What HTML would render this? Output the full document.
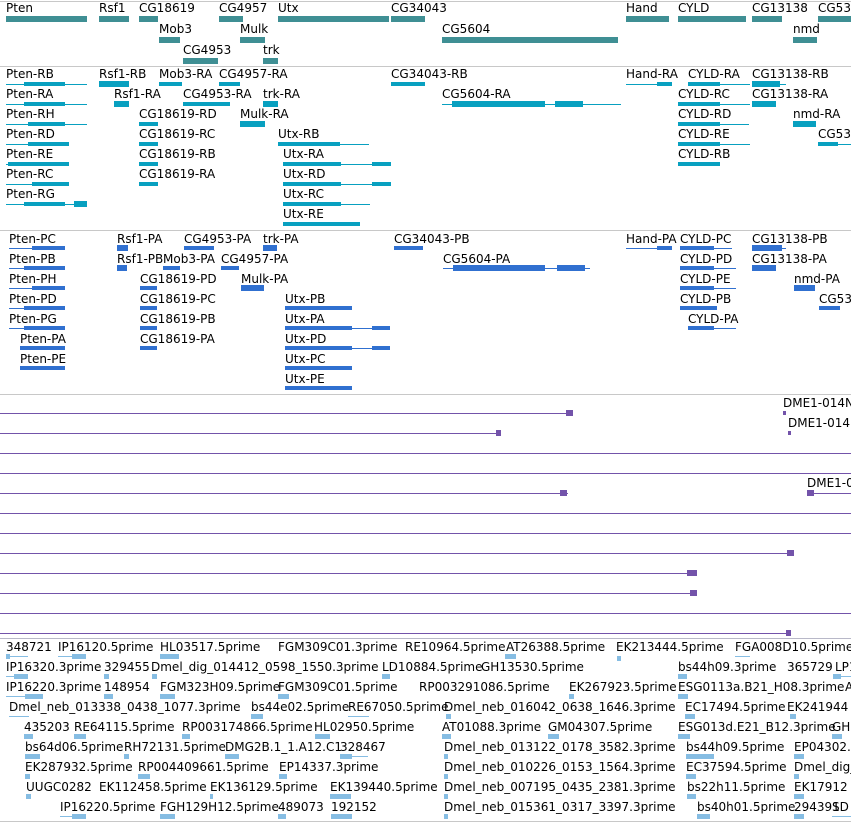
<!DOCTYPE html>
<html><head><meta charset="utf-8"><style>
body{margin:0;width:851px;height:822px;overflow:hidden;background:#fff;position:relative;font-family:"DejaVu Sans","Liberation Sans",sans-serif;font-size:12px;color:#000}
.t{position:absolute;white-space:nowrap;line-height:13px}
.s{position:absolute;left:0;width:851px;height:1px;background:#c8c8c8}
.g{position:absolute;height:6px;background:#3f8f94}
.c{position:absolute;height:1px;background:#08a0c0}
.cb{position:absolute;height:6px;background:#08a0c0}
.bl{position:absolute;height:1px;background:#3070d0}
.bb{position:absolute;height:6px;background:#3070d0}
.p{position:absolute;height:1px;background:#7353aa}
.pa{position:absolute;height:6px;width:7px;background:#7353aa}
.lb{position:absolute;height:5px;background:#86bde3}
.ll{position:absolute;height:1px;background:#86bde3}
</style></head><body>
<div class="s" style="top:1px"></div>
<div class="s" style="top:66px"></div>
<div class="s" style="top:230px"></div>
<div class="s" style="top:394px"></div>
<div class="s" style="top:638px;background:#b8b8c8"></div>
<div class="s" style="top:821px"></div>

<!-- track 1 -->
<div class="t" style="left:6px;top:2px">Pten</div><div class="g" style="left:6px;top:16px;width:81px"></div>
<div class="t" style="left:99px;top:2px">Rsf1</div><div class="g" style="left:99px;top:16px;width:30px"></div>
<div class="t" style="left:139px;top:2px">CG18619</div><div class="g" style="left:139px;top:16px;width:19px"></div>
<div class="t" style="left:219px;top:2px">CG4957</div><div class="g" style="left:219px;top:16px;width:24px"></div>
<div class="t" style="left:278px;top:2px">Utx</div><div class="g" style="left:278px;top:16px;width:111px"></div>
<div class="t" style="left:391px;top:2px">CG34043</div><div class="g" style="left:391px;top:16px;width:34px"></div>
<div class="t" style="left:626px;top:2px">Hand</div><div class="g" style="left:626px;top:16px;width:43px"></div>
<div class="t" style="left:678px;top:2px">CYLD</div><div class="g" style="left:678px;top:16px;width:68px"></div>
<div class="t" style="left:752px;top:2px">CG13138</div><div class="g" style="left:752px;top:16px;width:30px"></div>
<div class="t" style="left:818px;top:2px">CG5340</div><div class="g" style="left:818px;top:16px;width:33px"></div>
<div class="t" style="left:159px;top:23px">Mob3</div><div class="g" style="left:159px;top:37px;width:21px"></div>
<div class="t" style="left:240px;top:23px">Mulk</div><div class="g" style="left:240px;top:37px;width:25px"></div>
<div class="t" style="left:442px;top:23px">CG5604</div><div class="g" style="left:442px;top:37px;width:176px"></div>
<div class="t" style="left:793px;top:23px">nmd</div><div class="g" style="left:793px;top:37px;width:24px"></div>
<div class="t" style="left:183px;top:44px">CG4953</div><div class="g" style="left:183px;top:58px;width:35px"></div>
<div class="t" style="left:263px;top:44px">trk</div><div class="g" style="left:263px;top:58px;width:15px"></div>

<!-- track 2 -->
<div class="t" style="left:6px;top:68px">Pten-RB</div><div class="c" style="left:6px;top:84px;width:81px"></div><div class="cb" style="left:24px;top:82px;width:41px;height:4px"></div>
<div class="t" style="left:99px;top:68px">Rsf1-RB</div><div class="cb" style="left:99px;top:81px;width:30px"></div>
<div class="t" style="left:159px;top:68px">Mob3-RA</div><div class="cb" style="left:159px;top:82px;width:23px;height:4px"></div>
<div class="t" style="left:219px;top:68px">CG4957-RA</div><div class="cb" style="left:219px;top:82px;width:21px;height:4px"></div>
<div class="t" style="left:391px;top:68px">CG34043-RB</div><div class="cb" style="left:391px;top:82px;width:34px;height:4px"></div>
<div class="t" style="left:626px;top:68px">Hand-RA</div><div class="c" style="left:626px;top:84px;width:46px"></div><div class="cb" style="left:657px;top:82px;width:15px;height:4px"></div>
<div class="t" style="left:688px;top:68px">CYLD-RA</div><div class="c" style="left:688px;top:84px;width:62px"></div><div class="cb" style="left:688px;top:82px;width:32px;height:4px"></div>
<div class="t" style="left:752px;top:68px">CG13138-RB</div><div class="cb" style="left:752px;top:81px;width:28px"></div><div class="c" style="left:752px;top:84px;width:34px"></div>

<div class="t" style="left:6px;top:88px">Pten-RA</div><div class="c" style="left:6px;top:104px;width:81px"></div><div class="cb" style="left:24px;top:102px;width:41px;height:4px"></div>
<div class="t" style="left:114px;top:88px">Rsf1-RA</div><div class="cb" style="left:114px;top:101px;width:15px"></div>
<div class="t" style="left:183px;top:88px">CG4953-RA</div><div class="cb" style="left:183px;top:102px;width:47px;height:4px"></div>
<div class="t" style="left:263px;top:88px">trk-RA</div><div class="cb" style="left:263px;top:101px;width:15px"></div>
<div class="t" style="left:442px;top:88px">CG5604-RA</div><div class="c" style="left:442px;top:104px;width:179px"></div><div class="cb" style="left:452px;top:101px;width:93px"></div><div class="cb" style="left:555px;top:101px;width:28px"></div>
<div class="t" style="left:678px;top:88px">CYLD-RC</div><div class="c" style="left:678px;top:104px;width:72px"></div><div class="cb" style="left:678px;top:102px;width:42px;height:4px"></div>
<div class="t" style="left:752px;top:88px">CG13138-RA</div><div class="cb" style="left:752px;top:101px;width:24px"></div>

<div class="t" style="left:6px;top:108px">Pten-RH</div><div class="c" style="left:6px;top:124px;width:81px"></div><div class="cb" style="left:28px;top:122px;width:37px;height:4px"></div>
<div class="t" style="left:139px;top:108px">CG18619-RD</div><div class="cb" style="left:139px;top:122px;width:19px;height:4px"></div>
<div class="t" style="left:240px;top:108px">Mulk-RA</div><div class="cb" style="left:240px;top:121px;width:25px"></div>
<div class="t" style="left:678px;top:108px">CYLD-RD</div><div class="c" style="left:678px;top:124px;width:71px"></div><div class="cb" style="left:678px;top:122px;width:42px;height:4px"></div>
<div class="t" style="left:793px;top:108px">nmd-RA</div><div class="cb" style="left:793px;top:121px;width:23px"></div>

<div class="t" style="left:6px;top:128px">Pten-RD</div><div class="c" style="left:6px;top:144px;width:63px"></div><div class="cb" style="left:28px;top:142px;width:41px;height:4px"></div>
<div class="t" style="left:139px;top:128px">CG18619-RC</div><div class="cb" style="left:139px;top:142px;width:19px;height:4px"></div>
<div class="t" style="left:278px;top:128px">Utx-RB</div><div class="c" style="left:278px;top:144px;width:91px"></div><div class="cb" style="left:278px;top:142px;width:62px;height:4px"></div>
<div class="t" style="left:678px;top:128px">CYLD-RE</div><div class="c" style="left:678px;top:144px;width:72px"></div><div class="cb" style="left:678px;top:142px;width:42px;height:4px"></div>
<div class="t" style="left:818px;top:128px">CG5340</div><div class="c" style="left:818px;top:144px;width:33px"></div><div class="cb" style="left:818px;top:142px;width:20px;height:4px"></div>

<div class="t" style="left:6px;top:148px">Pten-RE</div><div class="c" style="left:6px;top:164px;width:63px"></div><div class="cb" style="left:8px;top:162px;width:61px;height:4px"></div>
<div class="t" style="left:139px;top:148px">CG18619-RB</div><div class="cb" style="left:139px;top:162px;width:19px;height:4px"></div>
<div class="t" style="left:283px;top:148px">Utx-RA</div><div class="c" style="left:283px;top:164px;width:108px"></div><div class="cb" style="left:283px;top:162px;width:58px;height:4px"></div><div class="cb" style="left:372px;top:162px;width:19px;height:4px"></div>
<div class="t" style="left:678px;top:148px">CYLD-RB</div><div class="cb" style="left:678px;top:162px;width:42px;height:4px"></div>

<div class="t" style="left:6px;top:168px">Pten-RC</div><div class="c" style="left:6px;top:184px;width:63px"></div><div class="cb" style="left:32px;top:182px;width:37px;height:4px"></div>
<div class="t" style="left:139px;top:168px">CG18619-RA</div><div class="cb" style="left:139px;top:182px;width:19px;height:4px"></div>
<div class="t" style="left:283px;top:168px">Utx-RD</div><div class="c" style="left:283px;top:184px;width:108px"></div><div class="cb" style="left:283px;top:182px;width:58px;height:4px"></div><div class="cb" style="left:372px;top:182px;width:19px;height:4px"></div>

<div class="t" style="left:6px;top:188px">Pten-RG</div><div class="c" style="left:6px;top:204px;width:81px"></div><div class="cb" style="left:24px;top:202px;width:41px;height:4px"></div><div class="cb" style="left:74px;top:201px;width:13px"></div>
<div class="t" style="left:283px;top:188px">Utx-RC</div><div class="c" style="left:283px;top:204px;width:87px"></div><div class="cb" style="left:283px;top:202px;width:58px;height:4px"></div>
<div class="t" style="left:283px;top:208px">Utx-RE</div><div class="cb" style="left:283px;top:222px;width:77px;height:4px"></div>

<!-- track 3 -->
<div class="t" style="left:9px;top:233px">Pten-PC</div><div class="bl" style="left:9px;top:248px;width:56px"></div><div class="bb" style="left:32px;top:246px;width:33px;height:4px"></div>
<div class="t" style="left:117px;top:233px">Rsf1-PA</div><div class="bb" style="left:117px;top:245px;width:11px"></div>
<div class="t" style="left:184px;top:233px">CG4953-PA</div><div class="bb" style="left:184px;top:246px;width:30px;height:4px"></div>
<div class="t" style="left:263px;top:233px">trk-PA</div><div class="bb" style="left:263px;top:245px;width:14px"></div>
<div class="t" style="left:394px;top:233px">CG34043-PB</div><div class="bb" style="left:394px;top:246px;width:29px;height:4px"></div>
<div class="t" style="left:626px;top:233px">Hand-PA</div><div class="bl" style="left:626px;top:248px;width:46px"></div><div class="bb" style="left:657px;top:246px;width:15px;height:4px"></div>
<div class="t" style="left:680px;top:233px">CYLD-PC</div><div class="bl" style="left:680px;top:248px;width:52px"></div><div class="bb" style="left:680px;top:246px;width:34px;height:4px"></div>
<div class="t" style="left:752px;top:233px">CG13138-PB</div><div class="bb" style="left:752px;top:245px;width:30px"></div><div class="bl" style="left:752px;top:248px;width:34px"></div>

<div class="t" style="left:9px;top:253px">Pten-PB</div><div class="bl" style="left:9px;top:268px;width:56px"></div><div class="bb" style="left:24px;top:266px;width:41px;height:4px"></div>
<div class="t" style="left:117px;top:253px">Rsf1-PB</div><div class="bb" style="left:117px;top:265px;width:10px"></div>
<div class="t" style="left:163px;top:253px">Mob3-PA</div><div class="bb" style="left:163px;top:266px;width:17px;height:4px"></div>
<div class="t" style="left:221px;top:253px">CG4957-PA</div><div class="bb" style="left:221px;top:266px;width:18px;height:4px"></div>
<div class="t" style="left:443px;top:253px">CG5604-PA</div><div class="bl" style="left:443px;top:268px;width:147px"></div><div class="bb" style="left:453px;top:265px;width:92px"></div><div class="bb" style="left:557px;top:265px;width:28px"></div>
<div class="t" style="left:680px;top:253px">CYLD-PD</div><div class="bl" style="left:680px;top:268px;width:56px"></div><div class="bb" style="left:680px;top:266px;width:34px;height:4px"></div>
<div class="t" style="left:752px;top:253px">CG13138-PA</div><div class="bb" style="left:752px;top:265px;width:24px"></div>

<div class="t" style="left:9px;top:273px">Pten-PH</div><div class="bl" style="left:9px;top:288px;width:56px"></div><div class="bb" style="left:32px;top:286px;width:33px;height:4px"></div>
<div class="t" style="left:140px;top:273px">CG18619-PD</div><div class="bb" style="left:140px;top:286px;width:17px;height:4px"></div>
<div class="t" style="left:241px;top:273px">Mulk-PA</div><div class="bb" style="left:241px;top:285px;width:23px"></div>
<div class="t" style="left:680px;top:273px">CYLD-PE</div><div class="bl" style="left:680px;top:288px;width:56px"></div><div class="bb" style="left:680px;top:286px;width:34px;height:4px"></div>
<div class="t" style="left:794px;top:273px">nmd-PA</div><div class="bb" style="left:794px;top:285px;width:21px"></div>

<div class="t" style="left:9px;top:293px">Pten-PD</div><div class="bl" style="left:9px;top:308px;width:56px"></div><div class="bb" style="left:24px;top:306px;width:41px;height:4px"></div>
<div class="t" style="left:140px;top:293px">CG18619-PC</div><div class="bb" style="left:140px;top:306px;width:17px;height:4px"></div>
<div class="t" style="left:285px;top:293px">Utx-PB</div><div class="bb" style="left:285px;top:306px;width:67px;height:4px"></div>
<div class="t" style="left:680px;top:293px">CYLD-PB</div><div class="bb" style="left:680px;top:306px;width:37px;height:4px"></div>
<div class="t" style="left:819px;top:293px">CG5340</div><div class="bb" style="left:819px;top:306px;width:21px;height:4px"></div>

<div class="t" style="left:9px;top:313px">Pten-PG</div><div class="bl" style="left:9px;top:328px;width:56px"></div><div class="bb" style="left:24px;top:326px;width:41px;height:4px"></div>
<div class="t" style="left:140px;top:313px">CG18619-PB</div><div class="bb" style="left:140px;top:326px;width:17px;height:4px"></div>
<div class="t" style="left:285px;top:313px">Utx-PA</div><div class="bl" style="left:285px;top:328px;width:105px"></div><div class="bb" style="left:285px;top:326px;width:67px;height:4px"></div><div class="bb" style="left:372px;top:326px;width:18px;height:4px"></div>
<div class="t" style="left:688px;top:313px">CYLD-PA</div><div class="bl" style="left:688px;top:328px;width:48px"></div><div class="bb" style="left:688px;top:326px;width:26px;height:4px"></div>

<div class="t" style="left:20px;top:333px">Pten-PA</div><div class="bb" style="left:20px;top:346px;width:45px;height:4px"></div>
<div class="t" style="left:140px;top:333px">CG18619-PA</div><div class="bb" style="left:140px;top:346px;width:17px;height:4px"></div>
<div class="t" style="left:285px;top:333px">Utx-PD</div><div class="bl" style="left:285px;top:348px;width:105px"></div><div class="bb" style="left:285px;top:346px;width:67px;height:4px"></div><div class="bb" style="left:372px;top:346px;width:18px;height:4px"></div>
<div class="t" style="left:20px;top:353px">Pten-PE</div><div class="bb" style="left:20px;top:366px;width:45px;height:4px"></div>
<div class="t" style="left:285px;top:353px">Utx-PC</div><div class="bb" style="left:285px;top:366px;width:67px;height:4px"></div>
<div class="t" style="left:285px;top:373px">Utx-PE</div><div class="bb" style="left:285px;top:386px;width:67px;height:4px"></div>

<!-- track 4 -->
<div class="p" style="left:0;top:413px;width:568px"></div><div class="pa" style="left:566px;top:410px"></div>
<div class="p" style="left:0;top:433px;width:498px"></div><div class="pa" style="left:496px;top:430px;width:5px"></div>
<div class="p" style="left:0;top:453px;width:851px"></div>
<div class="p" style="left:0;top:473px;width:851px"></div>
<div class="p" style="left:0;top:493px;width:568px"></div><div class="pa" style="left:560px;top:490px"></div>
<div class="p" style="left:0;top:513px;width:851px"></div>
<div class="p" style="left:0;top:533px;width:851px"></div>
<div class="p" style="left:0;top:553px;width:793px"></div><div class="pa" style="left:787px;top:550px"></div>
<div class="p" style="left:0;top:573px;width:692px"></div><div class="pa" style="left:687px;top:570px;width:10px"></div>
<div class="p" style="left:0;top:593px;width:692px"></div><div class="pa" style="left:690px;top:590px"></div>
<div class="p" style="left:0;top:613px;width:851px"></div>
<div class="p" style="left:0;top:633px;width:790px"></div><div class="pa" style="left:786px;top:630px;width:5px"></div>
<div class="t" style="left:783px;top:397px">DME1-014N</div><div class="pa" style="left:783px;top:411px;width:3px;height:4px"></div>
<div class="t" style="left:788px;top:417px">DME1-014</div><div class="pa" style="left:788px;top:431px;width:3px;height:4px"></div>
<div class="t" style="left:807px;top:477px">DME1-0</div><div class="pa" style="left:807px;top:490px"></div><div class="p" style="left:807px;top:493px;width:44px"></div>

<!-- track 5 -->
<div class="t" style="left:6px;top:641px">348721</div><div class="ll" style="left:6px;top:656px;width:22px"></div><div class="lb" style="left:6px;top:654px;width:4px"></div>
<div class="t" style="left:58px;top:641px">IP16120.5prime</div><div class="ll" style="left:58px;top:656px;width:28px"></div><div class="lb" style="left:72px;top:654px;width:14px"></div>
<div class="t" style="left:160px;top:641px">HL03517.5prime</div><div class="lb" style="left:160px;top:654px;width:19px"></div>
<div class="t" style="left:278px;top:641px">FGM309C01.3prime</div>
<div class="t" style="left:405px;top:641px">RE10964.5prime</div>
<div class="t" style="left:506px;top:641px">AT26388.5prime</div><div class="lb" style="left:505px;top:654px;width:11px"></div>
<div class="t" style="left:616px;top:641px">EK213444.5prime</div><div class="lb" style="left:617px;top:656px;width:4px"></div>
<div class="t" style="left:735px;top:641px">FGA008D10.5prime</div><div class="ll" style="left:735px;top:656px;width:15px"></div>

<div class="t" style="left:6px;top:661px">IP16320.3prime</div><div class="ll" style="left:6px;top:676px;width:22px"></div><div class="lb" style="left:14px;top:674px;width:14px"></div>
<div class="t" style="left:104px;top:661px">329455</div><div class="lb" style="left:104px;top:674px;width:5px"></div>
<div class="t" style="left:151px;top:661px">Dmel_dig_014412_0598_1550.3prime</div><div class="lb" style="left:152px;top:674px;width:5px"></div>
<div class="t" style="left:382px;top:661px">LD10884.5prime</div><div class="lb" style="left:382px;top:674px;width:8px"></div>
<div class="t" style="left:481px;top:661px">GH13530.5prime</div>
<div class="t" style="left:678px;top:661px">bs44h09.3prime</div><div class="lb" style="left:678px;top:674px;width:9px"></div>
<div class="t" style="left:787px;top:661px">365729</div><div class="t" style="left:835px;top:661px">LP1</div><div class="ll" style="left:833px;top:676px;width:18px"></div><div class="lb" style="left:833px;top:674px;width:8px"></div>

<div class="t" style="left:6px;top:681px">IP16220.3prime</div><div class="ll" style="left:6px;top:696px;width:37px"></div><div class="lb" style="left:25px;top:694px;width:18px"></div>
<div class="t" style="left:104px;top:681px">148954</div><div class="lb" style="left:104px;top:694px;width:9px"></div>
<div class="t" style="left:160px;top:681px">FGM323H09.5prime</div><div class="lb" style="left:160px;top:694px;width:15px"></div>
<div class="t" style="left:278px;top:681px">FGM309C01.5prime</div><div class="lb" style="left:278px;top:694px;width:11px"></div>
<div class="t" style="left:419px;top:681px">RP003291086.5prime</div>
<div class="t" style="left:569px;top:681px">EK267923.5prime</div><div class="lb" style="left:569px;top:694px;width:5px"></div>
<div class="t" style="left:678px;top:681px">ESG0113a.B21_H08.3prime</div><div class="lb" style="left:678px;top:694px;width:10px"></div>
<div class="t" style="left:845px;top:681px">A</div>

<div class="t" style="left:9px;top:701px">Dmel_neb_013338_0438_1077.3prime</div><div class="ll" style="left:9px;top:716px;width:20px"></div>
<div class="t" style="left:251px;top:701px">bs44e02.5prime</div><div class="lb" style="left:251px;top:714px;width:12px"></div>
<div class="t" style="left:348px;top:701px">RE67050.5prime</div><div class="ll" style="left:348px;top:716px;width:21px"></div>
<div class="t" style="left:444px;top:701px">Dmel_neb_016042_0638_1646.3prime</div><div class="lb" style="left:446px;top:714px;width:5px"></div>
<div class="t" style="left:685px;top:701px">EC17494.5prime</div><div class="lb" style="left:685px;top:714px;width:10px"></div>
<div class="t" style="left:787px;top:701px">EK241944</div><div class="lb" style="left:790px;top:714px;width:6px"></div>

<div class="t" style="left:24px;top:721px">435203</div><div class="lb" style="left:24px;top:734px;width:9px"></div>
<div class="t" style="left:74px;top:721px">RE64115.5prime</div><div class="lb" style="left:74px;top:734px;width:12px"></div>
<div class="t" style="left:182px;top:721px">RP003174866.5prime</div><div class="lb" style="left:182px;top:734px;width:8px"></div>
<div class="t" style="left:314px;top:721px">HL02950.5prime</div><div class="lb" style="left:315px;top:734px;width:15px"></div>
<div class="t" style="left:442px;top:721px">AT01088.3prime</div><div class="lb" style="left:442px;top:734px;width:9px"></div>
<div class="t" style="left:548px;top:721px">GM04307.5prime</div><div class="lb" style="left:548px;top:734px;width:11px"></div>
<div class="t" style="left:678px;top:721px">ESG013d.E21_B12.3prime</div><div class="lb" style="left:678px;top:734px;width:12px"></div>
<div class="t" style="left:832px;top:721px">GH</div><div class="lb" style="left:832px;top:734px;width:10px"></div>

<div class="t" style="left:25px;top:741px">bs64d06.5prime</div><div class="lb" style="left:25px;top:754px;width:15px"></div>
<div class="t" style="left:124px;top:741px">RH72131.5prime</div><div class="lb" style="left:124px;top:754px;width:5px"></div>
<div class="t" style="left:225px;top:741px">DMG2B.1_1.A12.C1</div><div class="lb" style="left:225px;top:754px;width:14px"></div>
<div class="t" style="left:340px;top:741px">328467</div><div class="ll" style="left:340px;top:756px;width:28px"></div><div class="lb" style="left:340px;top:754px;width:12px"></div>
<div class="t" style="left:444px;top:741px">Dmel_neb_013122_0178_3582.3prime</div><div class="lb" style="left:444px;top:754px;width:4px"></div>
<div class="t" style="left:686px;top:741px">bs44h09.5prime</div><div class="lb" style="left:686px;top:754px;width:28px"></div>
<div class="t" style="left:794px;top:741px">EP04302.</div><div class="lb" style="left:794px;top:754px;width:10px"></div>

<div class="t" style="left:25px;top:761px">EK287932.5prime</div><div class="lb" style="left:25px;top:774px;width:5px"></div>
<div class="t" style="left:138px;top:761px">RP004409661.5prime</div><div class="lb" style="left:138px;top:774px;width:12px"></div>
<div class="t" style="left:279px;top:761px">EP14337.3prime</div><div class="lb" style="left:279px;top:774px;width:8px"></div>
<div class="t" style="left:444px;top:761px">Dmel_neb_010226_0153_1564.3prime</div><div class="lb" style="left:444px;top:774px;width:4px"></div>
<div class="t" style="left:686px;top:761px">EC37594.5prime</div><div class="lb" style="left:686px;top:774px;width:10px"></div>
<div class="t" style="left:794px;top:761px">Dmel_dig_</div><div class="lb" style="left:794px;top:774px;width:5px"></div>

<div class="t" style="left:26px;top:781px">UUGC0282</div><div class="lb" style="left:26px;top:794px;width:5px"></div>
<div class="t" style="left:99px;top:781px">EK112458.5prime</div>
<div class="t" style="left:210px;top:781px">EK136129.5prime</div><div class="lb" style="left:210px;top:794px;width:3px"></div>
<div class="t" style="left:330px;top:781px">EK139440.5prime</div><div class="lb" style="left:330px;top:794px;width:21px"></div>
<div class="t" style="left:444px;top:781px">Dmel_neb_007195_0435_2381.3prime</div><div class="lb" style="left:444px;top:794px;width:4px"></div>
<div class="t" style="left:687px;top:781px">bs22h11.5prime</div><div class="lb" style="left:687px;top:794px;width:9px"></div>
<div class="t" style="left:794px;top:781px">EK17912</div><div class="lb" style="left:794px;top:794px;width:10px"></div>

<div class="t" style="left:60px;top:801px">IP16220.5prime</div><div class="ll" style="left:60px;top:816px;width:26px"></div><div class="lb" style="left:72px;top:814px;width:14px"></div>
<div class="t" style="left:160px;top:801px">FGH129H12.5prime</div><div class="lb" style="left:160px;top:814px;width:15px"></div>
<div class="t" style="left:278px;top:801px">489073</div><div class="lb" style="left:278px;top:814px;width:8px"></div>
<div class="t" style="left:331px;top:801px">192152</div><div class="lb" style="left:331px;top:814px;width:21px"></div>
<div class="t" style="left:444px;top:801px">Dmel_neb_015361_0317_3397.3prime</div><div class="lb" style="left:444px;top:814px;width:4px"></div>
<div class="t" style="left:697px;top:801px">bs40h01.5prime</div><div class="lb" style="left:697px;top:814px;width:13px"></div>
<div class="t" style="left:794px;top:801px">294391</div><div class="t" style="left:832px;top:801px">SD</div><div class="lb" style="left:794px;top:814px;width:10px"></div><div class="ll" style="left:832px;top:816px;width:19px"></div>
</body></html>
